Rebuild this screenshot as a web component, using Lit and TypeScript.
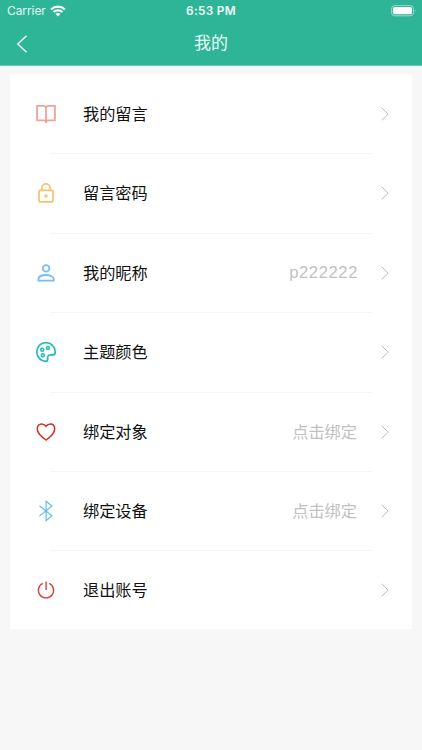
import { LitElement, html, svg, css } from "lit";
import { customElement } from "lit/decorators.js";

interface Item {
  icon: string;
  color: string;
  label: string;
  value?: string;
}

const ITEMS: Item[] = [
  { icon: "book", color: "#f5a09b", label: "我的留言" },
  { icon: "lock", color: "#f8c071", label: "留言密码" },
  { icon: "person", color: "#78bdf6", label: "我的昵称", value: "p222222" },
  { icon: "palette", color: "#20bdb8", label: "主题颜色" },
  { icon: "heart", color: "#d2301f", label: "绑定对象", value: "点击绑定" },
  { icon: "bluetooth", color: "#62bde8", label: "绑定设备", value: "点击绑定" },
  { icon: "power", color: "#d5433a", label: "退出账号" },
];

// All glyphs share a 24x24 box centred on 12,12.
const GLYPHS: Record<string, unknown> = {
  book: svg`<path stroke-width="1.8" d="M12 5.4C11.6 4.3 10.9 3.9 9.6 3.9H3.1V18.4H9.6C11 18.4 12 19 12 20.7C12 19 13 18.4 14.4 18.4H20.9V3.9H14.4C13.1 3.9 12.4 4.3 12 5.4ZM12 5.4V21"/>`,
  lock: svg`<rect x="5" y="9.4" width="14" height="11.4" rx="1" stroke-width="1.7"/><path stroke-width="1.7" d="M7.9 9.4V6.9a4.1 4.1 0 0 1 8.2 0V9.4"/><circle cx="12" cy="15" r="1.7" fill="currentColor" stroke="none"/>`,
  person: svg`<circle cx="12.1" cy="7.4" r="3.3" stroke-width="1.8"/><path stroke-width="1.8" d="M4.4 19.7V18.4C4.4 15.7 7.6 14 12 14S19.8 15.7 19.8 18.4V19.7Z"/>`,
  palette: svg`<path stroke-width="1.7" d="M12.1 2.7C6.6 2.7 2.8 6.8 2.8 12C2.8 17.3 7 21.2 11.6 21.3C13.1 21.3 13.7 20.5 13.7 19.3V17.6C13.7 15.7 14.8 14.8 16.4 14.8H19C20.5 14.8 21.3 13.8 21.3 12C21 6.6 17 2.7 12.1 2.7Z"/><g stroke-width="1.5"><circle cx="8.2" cy="9.8" r="1.5"/><circle cx="13.9" cy="7.9" r="1.5"/><circle cx="8.8" cy="15.3" r="1.5"/></g>`,
  heart: svg`<path stroke-width="1.5" d="M12 6.2C10.7 4.5 9.2 3.9 7.6 3.9C5 3.9 3.3 6 3.3 8.9C3.3 13.2 7.2 16.6 12 20C16.8 16.6 20.7 13.2 20.7 8.9C20.7 6 19 3.9 16.4 3.9C14.8 3.9 13.3 4.5 12 6.2Z"/>`,
  bluetooth: svg`<path stroke-width="1.2" d="M5.4 6.8L17.9 16.8L12.1 21.8V2.2L17.9 7.1L5.4 17.1"/>`,
  power: svg`<path stroke-width="1.4" d="M8.8 5.4A7.6 7.6 0 1 0 15.2 5.4M12.1 3.6V12"/>`,
};

@customElement("status-bar")
class StatusBar extends LitElement {
  static styles = css`
    :host {
      display: grid;
      grid-template-columns: 1fr auto 1fr;
      align-items: center;
      height: 22px;
      padding: 0 5px 0 7px;
      font: 12px/22px Inter, "Liberation Sans", sans-serif;
      color: #e4f8f2;
    }
    .left {
      display: flex;
      align-items: center;
      gap: 4px;
      letter-spacing: -0.08px;
    }
    .time {
      margin-left: -2px;
      font-size: 11.8px;
      font-weight: 600;
      letter-spacing: 0.3px;
      color: #f0fcf9;
    }
    .battery {
      justify-self: end;
    }
    svg {
      display: block;
    }
  `;

  render() {
    return html`
      <div class="left">
        <span>Carrier</span>
        <svg width="16" height="12" viewBox="0 0 16 12" fill="none" stroke="#fff" stroke-width="2.1">
          <path d="M1.1 4.4C5 .7 11 .7 14.9 4.4M3.6 7.1C6 4.8 10 4.8 12.4 7.1" />
          <path d="M8 11.4L5.5 8.8C6.9 7.6 9.1 7.6 10.5 8.8Z" fill="#fff" stroke="none" />
        </svg>
      </div>
      <span class="time">6:53 PM</span>
      <svg class="battery" width="26" height="12" viewBox="0 0 26 12">
        <rect x=".6" y=".6" width="21.8" height="10.2" rx="3" fill="none" stroke="#fff" stroke-opacity=".5" />
        <rect x="2.1" y="2.1" width="18.8" height="7.2" rx="1.6" fill="#fff" />
        <path d="M23.8 4Q25.2 5.7 23.8 7.4Z" fill="#fff" fill-opacity=".6" />
      </svg>
    `;
  }
}

@customElement("app-root")
class AppRoot extends LitElement {
  static styles = css`
    :host {
      display: block;
      box-sizing: border-box;
      height: 750px;
      overflow: hidden;
      background: #f7f7f7;
      font-family: "Liberation Sans", "Noto Sans CJK SC", sans-serif;
    }
    .header {
      box-sizing: border-box;
      height: 66px;
      background: #2eb598;
      border-bottom: 1px solid #6bccb7;
    }
    .nav {
      display: grid;
      grid-template-columns: 1fr auto 1fr;
      align-items: center;
      height: 43px;
      padding: 0 16px;
    }
    .title {
      font-size: 17px;
      line-height: 24px;
      color: #e9faf5;
    }
    svg {
      display: block;
      fill: none;
    }
    .card {
      margin: 8px 10px 0;
      background: #fff;
    }
    .row {
      box-sizing: border-box;
      display: flex;
      align-items: center;
      height: 79.4px;
      padding: 0.8px 22px 0 24px;
    }
    .row + .row {
      background: linear-gradient(#f5f5f5, #f5f5f5) 40px 0 / 322px 1px no-repeat;
    }
    .row:last-child {
      height: 79px;
    }
    .icon {
      width: 24px;
      height: 24px;
      stroke: currentColor;
    }
    .label {
      margin-left: 25px;
      font-size: 16.2px;
      line-height: 24px;
      color: #111;
    }
    .value {
      margin-left: auto;
      margin-right: 23px;
      font-size: 16.2px;
      line-height: 24px;
      color: #c1c1c1;
    }
    .latin {
      margin-right: 22px;
      font-size: 16.6px;
      letter-spacing: 0.6px;
    }
    .row > .arrow:not(.value + .arrow) {
      margin-left: auto;
    }
  `;

  render() {
    return html`
      <div class="header">
        <status-bar></status-bar>
        <div class="nav">
          <svg width="12" height="18" viewBox="0 0 12 18" stroke="#effbf8" stroke-width="1.4">
            <path d="M10.5 .8L1.8 9.1L10.5 17.3" />
          </svg>
          <span class="title">我的</span>
        </div>
      </div>
      <div class="card">
        ${ITEMS.map(
          (item) => html`
            <div class="row">
              <svg class="icon" viewBox="0 0 24 24" style="color:${item.color}">${GLYPHS[item.icon]}</svg>
              <span class="label">${item.label}</span>
              ${item.value
                ? html`<span class="value ${/^\w+$/.test(item.value) ? "latin" : ""}">${item.value}</span>`
                : ""}
              <svg class="arrow" width="10" height="14" viewBox="0 0 10 14" stroke="#bdbdbd" stroke-width="1">
                <path d="M1.7 .8L8.2 7.1L1.7 13.4" />
              </svg>
            </div>
          `,
        )}
      </div>
    `;
  }
}
